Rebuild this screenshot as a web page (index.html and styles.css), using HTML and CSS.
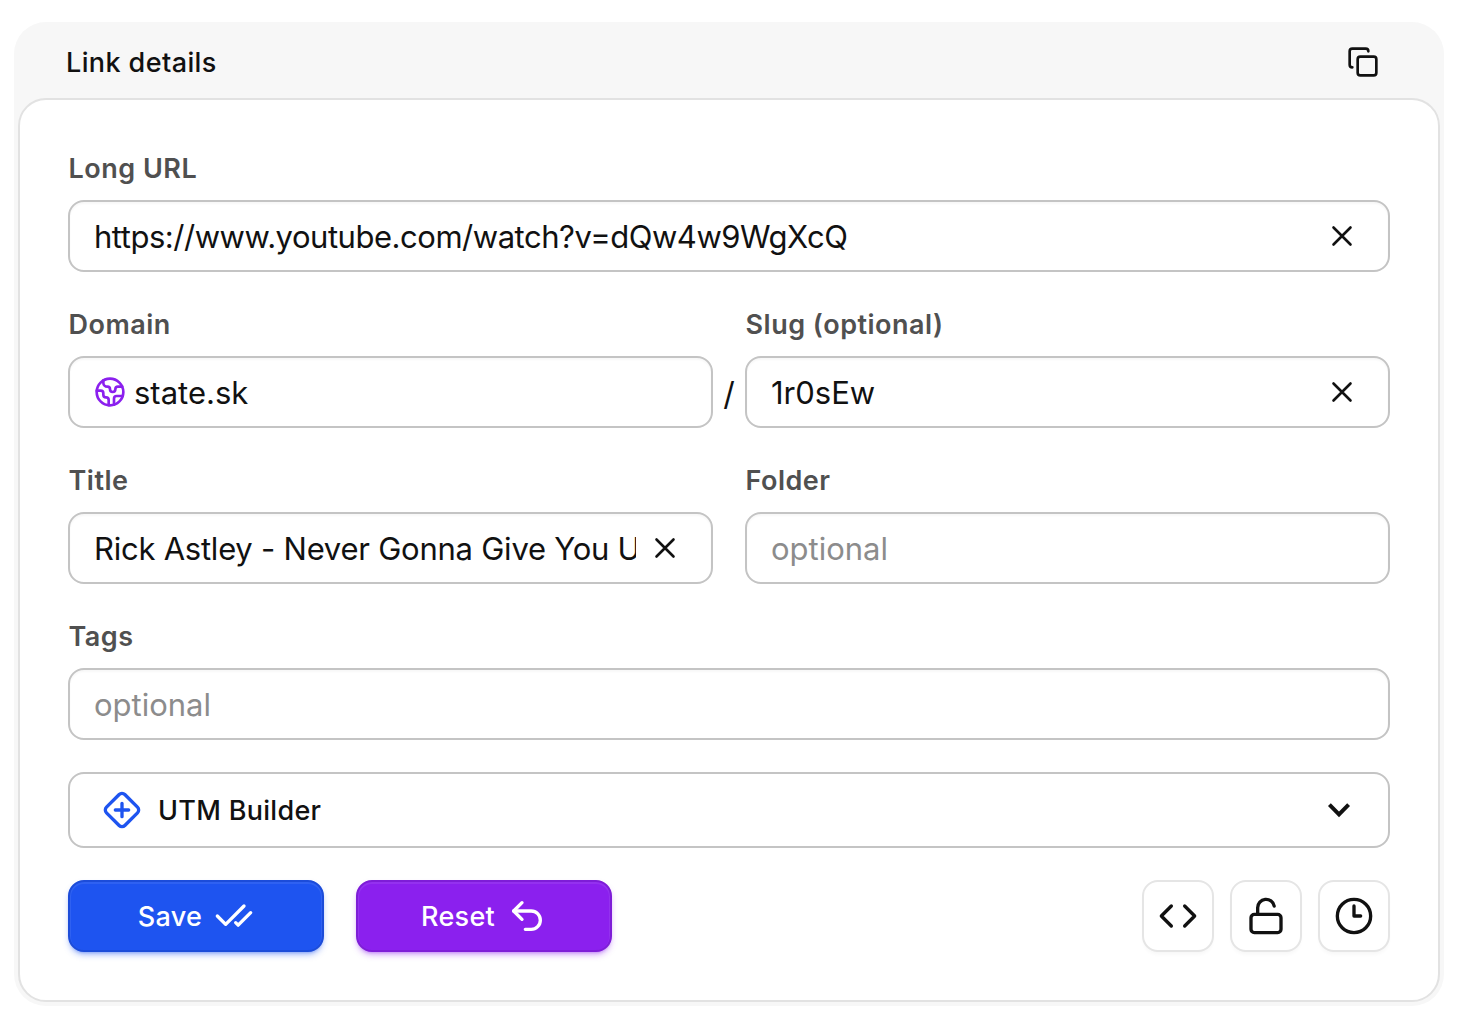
FILE: index.html
```html
<!DOCTYPE html>
<html lang="en">
<head>
    <meta charset="UTF-8">
    <meta name="viewport" content="width=device-width, initial-scale=1.0">
    <title>Link details</title>
    <link rel="stylesheet" href="styles.css">
</head>
<body>
    <div class="card">
        <div class="card-header">
            <h1>Link details</h1>
            <svg class="icon icon-sm" viewBox="0 0 24 24"><rect x="8" y="8" width="14" height="14" rx="2"/><path d="M4 16c-1.1 0-2-.9-2-2V4c0-1.1.9-2 2-2h10c1.1 0 2 .9 2 2"/></svg>
        </div>

        <form class="card-body">
            <div class="field">
                <label>Long URL</label>
                <div class="input">
                    <span class="value url">https://www.youtube.com/watch?v=dQw4w9WgXcQ</span>
                    <svg class="icon clear" viewBox="0 0 24 24"><path d="M3.5 3.5l17 17M20.5 3.5l-17 17"/></svg>
                </div>
            </div>

            <div class="row">
                <div class="field">
                    <label>Domain</label>
                    <div class="input">
                        <svg class="icon icon-sm globe" viewBox="0 0 24 24"><path d="M21.54 15H17a2 2 0 0 0-2 2v4.54"/><path d="M7 3.34V5a3 3 0 0 0 3 3a2 2 0 0 1 2 2c0 1.1.9 2 2 2a2 2 0 0 0 2-2c0-1.1.9-2 2-2h3.17"/><path d="M11 21.95V18a2 2 0 0 0-2-2a2 2 0 0 1-2-2v-1a2 2 0 0 0-2-2H2.05"/><circle cx="12" cy="12" r="10"/></svg>
                        <span class="value">state.sk</span>
                    </div>
                </div>
                <span class="slash">/</span>
                <div class="field">
                    <label>Slug (optional)</label>
                    <div class="input">
                        <span class="value">1r0sEw</span>
                        <svg class="icon clear" viewBox="0 0 24 24"><path d="M3.5 3.5l17 17M20.5 3.5l-17 17"/></svg>
                    </div>
                </div>
            </div>

            <div class="row">
                <div class="field">
                    <label>Title</label>
                    <div class="input">
                        <span class="value title">Rick Astley - Never Gonna Give You Up</span>
                        <svg class="icon clear" viewBox="0 0 24 24"><path d="M3.5 3.5l17 17M20.5 3.5l-17 17"/></svg>
                    </div>
                </div>
                <span class="slash"></span>
                <div class="field">
                    <label>Folder</label>
                    <div class="input"><span class="value placeholder">optional</span></div>
                </div>
            </div>

            <div class="field">
                <label>Tags</label>
                <div class="input"><span class="value placeholder">optional</span></div>
            </div>

            <div class="utm">
                <svg class="icon icon-md blue" viewBox="0 0 24 24"><path d="M2.7 10.3a2.41 2.41 0 0 0 0 3.41l7.59 7.59a2.41 2.41 0 0 0 3.41 0l7.59-7.59a2.41 2.41 0 0 0 0-3.41L13.7 2.71a2.41 2.41 0 0 0-3.41 0z"/><path d="M8 12h8M12 8v8"/></svg>
                <span class="utm-title">UTM Builder</span>
                <svg class="chevron" viewBox="0 0 24 16"><path d="M2.4 2.7L12 12.3l9.6-9.6"/></svg>
            </div>

            <div class="actions">
                <button type="button" class="btn btn-save">
                    <span>Save</span>
                    <svg class="icon icon-md" viewBox="0 0 24 24"><path d="M18 6 7 17l-5-5"/><path d="m22 10-7.5 7.5L13 16"/></svg>
                </button>
                <button type="button" class="btn btn-reset">
                    <span>Reset</span>
                    <svg class="icon icon-md" viewBox="0 0 24 24"><path d="M9 14 4 9l5-5"/><path d="M4 9h10.5a5.5 5.5 0 0 1 5.5 5.5a5.5 5.5 0 0 1-5.5 5.5H11"/></svg>
                </button>
                <div class="tools">
                    <button type="button" class="tool"><svg class="icon icon-md" viewBox="0 0 24 24"><path d="m16 18 6-6-6-6"/><path d="m8 6-6 6 6 6"/></svg></button>
                    <button type="button" class="tool"><svg class="icon icon-md" viewBox="0 0 24 24"><rect x="3" y="11" width="18" height="11" rx="2"/><path d="M7 11V7a5 5 0 0 1 9.9-1"/></svg></button>
                    <button type="button" class="tool"><svg class="icon icon-md" viewBox="0 0 24 24"><circle cx="12" cy="12" r="10"/><path d="M12 6v6h4"/></svg></button>
                </div>
            </div>
        </form>
    </div>
</body>
</html>
```
FILE: styles.css
```css
* {
    box-sizing: border-box;
}
body {
    margin: 0;
    padding: 22px 20px 22px 14px;
    background: #fff;
    color: #111;
    font-family: Inter, sans-serif;
}
.card {
    height: 984px;
    padding: 0 4px 4px;
    background: #f7f7f7;
    border-radius: 32px;
}
.card-header {
    display: flex;
    align-items: center;
    justify-content: space-between;
    height: 76px;
    padding: 4px 61px 0 48px;
}
h1 {
    margin: 0;
    padding-top: 1px;
    font-size: 27px;
    font-weight: 500;
    letter-spacing: 0.4px;
}
.card-body {
    display: flex;
    flex-direction: column;
    gap: 32px;
    height: 904px;
    padding: 48px;
    background: #fff;
    border: 2px solid #e2e2e2;
    border-radius: 28px;
}
.icon {
    flex: none;
    fill: none;
    stroke: currentColor;
    stroke-width: 2;
    stroke-linecap: round;
    stroke-linejoin: round;
}
.icon-sm {
    width: 32px;
    height: 32px;
}
.icon-md {
    width: 40px;
    height: 40px;
}
.row {
    display: flex;
}
.field {
    flex: 1;
    min-width: 0;
}
.card-body > .field {
    flex: none;
}
label {
    display: block;
    height: 40px;
    margin-bottom: 12px;
    padding-left: 0.5px;
    line-height: 42px;
    font-size: 27px;
    font-weight: 600;
    letter-spacing: 0.5px;
    color: #505050;
}
.input {
    display: flex;
    align-items: center;
    height: 72px;
    padding: 0 34px 0 24px;
    border: 2px solid #c4c4c4;
    border-radius: 16px;
    box-shadow: inset 0 2px 2px rgba(0,0,0,0.03);
}
.value {
    flex: 1;
    padding-top: 1px;
    overflow: hidden;
    white-space: nowrap;
    line-height: 48px;
    font-size: 31px;
}
.url {
    letter-spacing: -0.47px;
}
.title {
    margin-right: 17px;
    letter-spacing: -0.24px;
}
.placeholder {
    color: #8c8c8c;
}
.clear {
    width: 24px;
    height: 24px;
    stroke-width: 2.6;
}
.globe {
    color: #8b20ee;
    margin-right: 8px;
}
.slash {
    width: 32px;
    padding-top: 56px;
    line-height: 68px;
    text-align: center;
    font-size: 32px;
}
.utm {
    display: flex;
    align-items: center;
    height: 76px;
    padding: 0 37px 0 32px;
    border: 2px solid #c4c4c4;
    border-radius: 16px;
}
.utm-title {
    flex: 1;
    margin-left: 16px;
    padding-top: 1px;
    font-size: 27px;
    font-weight: 500;
    letter-spacing: 0.3px;
}
.blue {
    color: #1e54f0;
}
.chevron {
    width: 24px;
    height: 16px;
    fill: none;
    stroke: #111;
    stroke-width: 4;
}
.actions {
    display: flex;
    gap: 32px;
}
button {
    display: flex;
    align-items: center;
    justify-content: center;
    height: 72px;
    padding: 0;
    border-radius: 16px;
    font-family: inherit;
}
.btn {
    gap: 12px;
    width: 256px;
    color: white;
    font-size: 27px;
    font-weight: 500;
    letter-spacing: 0.3px;
}
.btn span {
    padding-top: 1px;
}
.btn-save {
    background: #1e54f0;
    border: 2px solid #1c4cd9;
    box-shadow: inset 0 1px 0 1px rgba(255,255,255,0.08), 0 4px 6px -1px rgba(30,84,240,0.35), 0 3px 3px -2px rgba(30,84,240,0.3);
}
.btn-reset {
    background: #8b20ee;
    border: 2px solid #7e1dd7;
    box-shadow: inset 0 1px 0 1px rgba(255,255,255,0.08), 0 4px 6px -1px rgba(139,32,238,0.35), 0 3px 3px -2px rgba(139,32,238,0.3);
}
.tools {
    display: flex;
    gap: 16px;
    margin-left: auto;
}
.tool {
    width: 72px;
    background: #fff;
    border: 2px solid #e5e5e5;
    color: #111;
    box-shadow: 0 4px 4px -2px rgba(0,0,0,0.04);
}
```
